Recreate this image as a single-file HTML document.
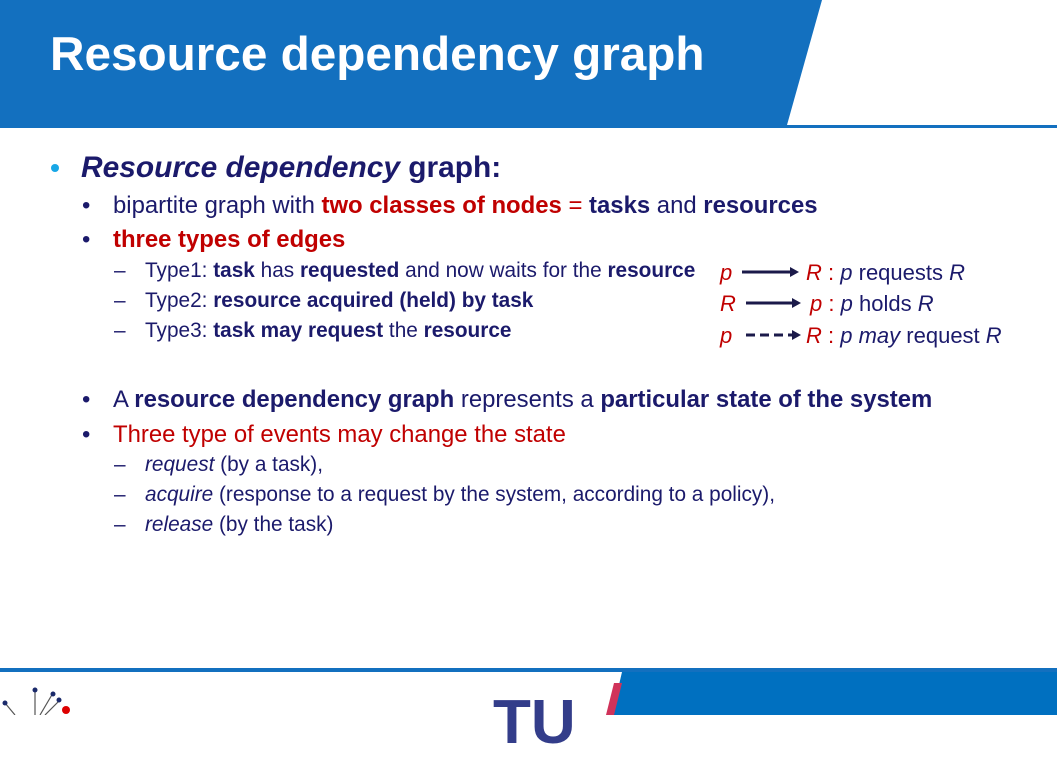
<!DOCTYPE html>
<html><head><meta charset="utf-8"><style>
*{margin:0;padding:0}
body{width:1057px;height:715px;position:relative;overflow:hidden;background:#fff;font-family:"Liberation Sans",sans-serif;color:#1b1a6b}
.t{position:absolute;white-space:nowrap;line-height:1}
.r{color:#c00000}
b{font-weight:bold}
.l1{font-size:29.9px;font-weight:bold}
.l2{font-size:23.9px}
.l3{font-size:20.8px}
.d{position:absolute;font-size:22px}
</style></head><body>
<svg width="1057" height="715" style="position:absolute;left:0;top:0">
<polygon points="0,0 822,0 787,125 0,125" fill="#1370bf"/>
<rect x="0" y="125" width="1057" height="3" fill="#1370bf"/>
<rect x="0" y="668" width="1057" height="4" fill="#1370bf"/>
<polygon points="622,672 1057,672 1057,715 612,715" fill="#0070c0"/>
<polygon points="614,683 622,683 614,715 606,715" fill="#d0335a"/>
<circle cx="55" cy="168" r="4" fill="#18a7e6"/>
<line x1="742" y1="272" x2="790" y2="272" stroke="#1b1a4a" stroke-width="3"/><polygon points="790,267 799,272 790,277" fill="#1b1a4a"/>
<line x1="746" y1="303" x2="792" y2="303" stroke="#1b1a4a" stroke-width="3"/><polygon points="792,298 801,303 792,308" fill="#1b1a4a"/>
<line x1="746" y1="335" x2="792" y2="335" stroke="#1b1a4a" stroke-width="3" stroke-dasharray="9,5"/><polygon points="792,330 801,335 792,340" fill="#1b1a4a"/>
<g stroke="#555" stroke-width="1.2"><line x1="15" y1="715" x2="5" y2="703"/><line x1="35" y1="715" x2="35" y2="690"/><line x1="40" y1="715" x2="53" y2="693"/><line x1="45" y1="715" x2="60" y2="700"/></g>
<circle cx="35" cy="690" r="2.5" fill="#1b2a6b"/><circle cx="53" cy="694" r="2.5" fill="#1b2a6b"/><circle cx="59" cy="700" r="2.5" fill="#1b2a6b"/><circle cx="66" cy="710" r="4" fill="#d00"/><circle cx="5" cy="703" r="2.5" fill="#1b2a6b"/>
</svg>
<div class="t" style="left:50px;top:31px;font-size:47.7px;font-weight:bold;color:#fff">Resource dependency graph</div>
<div class="t" style="left:493px;top:692px;font-size:62px;font-weight:bold;color:#333d8a">TU</div>
<div class="t l1" style="left:81px;top:153px"><i>Resource dependency</i> graph:</div>
<div class="t l2" style="left:82px;top:194px">•</div>
<div class="t l2" style="left:113px;top:194px">bipartite graph with <b class="r">two classes of nodes</b> <span class="r">=</span> <b>tasks</b> and <b>resources</b></div>
<div class="t l2" style="left:82px;top:228px">•</div>
<div class="t l2 r" style="left:113px;top:228px"><b>three types of edges</b></div>
<div class="t l3" style="left:114px;top:261px">–</div>
<div class="t l3" style="left:145px;top:261px">Type1: <b>task</b> has <b>requested</b> and now waits for the <b>resource</b></div>
<div class="t l3" style="left:114px;top:291px">–</div>
<div class="t l3" style="left:145px;top:291px">Type2: <b>resource acquired (held) by task</b></div>
<div class="t l3" style="left:114px;top:321px">–</div>
<div class="t l3" style="left:145px;top:321px">Type3: <b>task may request</b> the <b>resource</b></div>
<div class="t d" style="left:720px;top:262px"><i class="r">p</i></div>
<div class="t d" style="left:806px;top:262px"><i class="r">R</i><span class="r"> :</span> <i>p</i> requests <i>R</i></div>
<div class="t d" style="left:720px;top:293px"><i class="r">R</i></div>
<div class="t d" style="left:810px;top:293px"><i class="r">p</i><span class="r"> :</span> <i>p</i> holds <i>R</i></div>
<div class="t d" style="left:720px;top:325px"><i class="r">p</i></div>
<div class="t d" style="left:806px;top:325px"><i class="r">R</i><span class="r"> :</span> <i>p may</i> request <i>R</i></div>
<div class="t l2" style="left:82px;top:388px">•</div>
<div class="t l2" style="left:113px;top:388px">A <b>resource dependency graph</b> represents a <b>particular state of the system</b></div>
<div class="t l2" style="left:82px;top:423px">•</div>
<div class="t l2 r" style="left:113px;top:423px">Three type of events may change the state</div>
<div class="t l3" style="left:114px;top:455px">–</div>
<div class="t l3" style="left:145px;top:455px"><i>request</i> (by a task),</div>
<div class="t l3" style="left:114px;top:485px">–</div>
<div class="t l3" style="left:145px;top:485px"><i>acquire</i> (response to a request by the system, according to a policy),</div>
<div class="t l3" style="left:114px;top:515px">–</div>
<div class="t l3" style="left:145px;top:515px"><i>release</i> (by the task)</div>
</body></html>
